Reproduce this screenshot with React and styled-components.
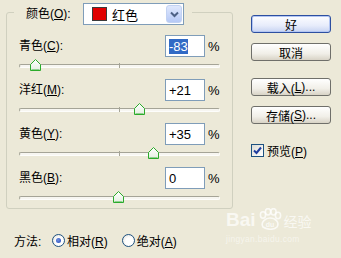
import React from 'react'
import styled, { createGlobalStyle } from 'styled-components'

const GlobalStyle = createGlobalStyle`
  html, body {
    margin: 0;
    padding: 0;
    background: #ece9d8;
  }
  body {
    font-family: 'Liberation Sans', 'Noto Sans CJK SC', sans-serif;
    font-size: 12px;
    color: #000;
  }
`

const channels = [
  { name: '青色', key: 'C', value: -83, text: '-83', selected: true },
  { name: '洋红', key: 'M', value: 21, text: '+21' },
  { name: '黄色', key: 'Y', value: 35, text: '+35' },
  { name: '黑色', key: 'B', value: 0, text: '0' },
]

const Page = styled.div`
  position: relative;
  width: 341px;
  height: 258px;
  box-sizing: border-box;
  padding-left: 6px;
  overflow: hidden;
`

const Main = styled.div`
  display: flex;
  align-items: flex-start;
`

const Group = styled.fieldset`
  box-sizing: border-box;
  width: 227px;
  height: 209px;
  margin: 0;
  padding: 10px 12px 0 12px;
  border: 1px solid #d0d0bf;
  border-radius: 3px;
  min-width: 0;
`

const Legend = styled.legend`
  display: flex;
  align-items: center;
  margin-left: -5px;
  padding: 3px 8px 0 12px;
`

const Label = styled.span`
  white-space: nowrap;
  line-height: 14px;
`

const ColorLabel = styled(Label)`
  width: 57px;
`

const Select = styled.div`
  box-sizing: border-box;
  width: 101px;
  height: 22px;
  display: flex;
  align-items: center;
  background: #fff;
  border: 1px solid #7f9db9;
  padding: 0 1px 0 8px;
`

const Swatch = styled.span`
  box-sizing: border-box;
  width: 15px;
  height: 14px;
  background: #e00000;
  border: 1px solid #3a3a3a;
  margin-right: 5px;
`

const SelectText = styled.span`
  flex: 1;
  font-size: 13px;
`

const ArrowButton = styled.span`
  box-sizing: border-box;
  width: 16px;
  height: 18px;
  display: flex;
  align-items: center;
  justify-content: center;
  border: 1px solid #c2d2f2;
  border-radius: 3px;
  background: linear-gradient(#dfe8fd, #b6c9f6);
`

const Row = styled.div`
  display: grid;
  grid-template-columns: 146px 40px 15px;
  align-items: center;
  height: 22px;
`

const ValueBox = styled.div`
  box-sizing: border-box;
  height: 22px;
  background: #fff;
  border: 1px solid #7f9db9;
  padding: 0 0 0 3px;
  display: flex;
  align-items: center;
  font-size: 13px;
`

const Selected = styled.span`
  background: #316ac5;
  color: #fff;
  line-height: 15px;
`

const Percent = styled.span`
  padding-left: 3px;
  font-size: 13px;
`

const SliderLine = styled.div`
  position: relative;
  height: 22px;
  padding-top: 7px;
  box-sizing: border-box;
`

const Track = styled.div`
  box-sizing: border-box;
  height: 4px;
  border: 1px solid;
  border-color: #a5a497 #fdfdfb #fdfdfb #a5a497;
  border-radius: 2px;
  background: #f7f6f1;
`

const Tick = styled.span`
  position: absolute;
  left: 100px;
  top: 6px;
  width: 1px;
  height: 5px;
  background: #a5a497;
`

const Thumb = styled.div`
  position: absolute;
  top: 2px;
  margin-left: -6px;
  line-height: 0;
`

const Side = styled.div`
  display: flex;
  flex-direction: column;
  margin-left: 18px;
  padding-top: 15px;
`

const Button = styled.div`
  box-sizing: border-box;
  width: 80px;
  height: 18px;
  margin-bottom: ${(p) => p.$gap}px;
  display: flex;
  align-items: center;
  justify-content: center;
  font-size: 12px;
  border: 1px solid ${(p) => (p.$primary ? '#2d4fa0' : '#6f6f6a')};
  border-radius: 3px;
  background: ${(p) =>
    p.$primary
      ? 'linear-gradient(#fdfdff, #e7ecfb 60%, #c7d3f2)'
      : 'linear-gradient(#ffffff, #f1efe8 60%, #d8d3c6)'};
  box-shadow: ${(p) => (p.$primary ? 'inset 0 0 0 1px #b3c6f3' : 'none')};
`

const Check = styled.label`
  display: flex;
  align-items: center;
  gap: 3px;
  margin-top: 1px;
`

const CheckBox = styled.span`
  box-sizing: border-box;
  width: 13px;
  height: 13px;
  border: 1px solid #1c5180;
  background: linear-gradient(135deg, #dcdcd5, #ffffff);
  display: flex;
  align-items: center;
  justify-content: center;
`

const MethodRow = styled.div`
  display: flex;
  align-items: center;
  height: 16px;
  margin-top: 23px;
  padding-left: 8px;
`

const MethodLabel = styled.span`
  width: 38px;
`

const Radio = styled.span`
  box-sizing: border-box;
  width: 13px;
  height: 13px;
  border-radius: 50%;
  border: 1px solid #1c5180;
  background: radial-gradient(circle at 60% 60%, #ffffff 40%, #dcdcd5);
  display: flex;
  align-items: center;
  justify-content: center;
  margin-right: 2px;

  &::after {
    content: '';
    width: 5px;
    height: 5px;
    border-radius: 50%;
    background: ${(p) => (p.$on ? 'radial-gradient(circle at 40% 40%, #6f8fe0, #2046b8)' : 'transparent')};
  }
`

const RadioText = styled.span`
  margin-right: ${(p) => p.$gap}px;
`

const Watermark = styled.div`
  position: absolute;
  left: 226px;
  top: 208px;
  display: flex;
  flex-direction: column;
  align-items: flex-start;
  color: rgba(255, 255, 255, 0.7);
  pointer-events: none;
`

const MarkTop = styled.div`
  display: flex;
  align-items: flex-end;
  gap: 1px;
`

const MarkBai = styled.span`
  font-family: 'Liberation Sans', sans-serif;
  font-weight: bold;
  font-size: 19px;
  line-height: 20px;
`

const MarkCn = styled.span`
  font-family: 'Noto Sans CJK SC', sans-serif;
  font-size: 14px;
  line-height: 18px;
`

const MarkUrl = styled.span`
  font-family: 'Liberation Sans', sans-serif;
  font-size: 8.5px;
  letter-spacing: 0.3px;
  margin-top: 4px;
  color: rgba(255, 255, 255, 0.55);
`

const SliderThumb = () => (
  <svg width="11" height="12" viewBox="0 0 11 12">
    <defs>
      <linearGradient id="th" x1="0" y1="0" x2="0" y2="1">
        <stop offset="0" stopColor="#ffffff" />
        <stop offset="1" stopColor="#e4eee0" />
      </linearGradient>
    </defs>
    <polygon points="0.5,5.5 5.5,0.5 10.5,5.5 10.5,11.5 0.5,11.5" fill="url(#th)" stroke="#2bab2b" />
    <line x1="1.5" y1="10.5" x2="9.5" y2="10.5" stroke="#8fd08f" />
  </svg>
)

const Paw = () => (
  <svg width="26" height="22" viewBox="0 0 26 22">
    <g fill="none" stroke="rgba(255,255,255,0.75)" strokeWidth="1.6">
      <ellipse cx="6" cy="7" rx="2.6" ry="3.2" />
      <ellipse cx="11" cy="3.8" rx="2.6" ry="3.2" />
      <ellipse cx="16.5" cy="3.8" rx="2.6" ry="3.2" />
      <ellipse cx="21" cy="7.5" rx="2.6" ry="3.2" />
      <path d="M6 19 C3 14 9 10 13 10 C18 10 23 14 20 19 C17 22 10 22 6 19 Z" />
    </g>
    <text x="13" y="19" textAnchor="middle" fontSize="7" fontWeight="bold" fill="rgba(255,255,255,0.75)" fontFamily="Liberation Sans">du</text>
  </svg>
)

const Mn = ({ k }) => (
  <>
    (<u>{k}</u>)
  </>
)

const App = () => {
  return (
    <>
      <GlobalStyle />
      <Page>
        <Main>
          <Group>
            <Legend>
              <ColorLabel>
                颜色<Mn k="O" />:
              </ColorLabel>
              <Select>
                <Swatch />
                <SelectText>红色</SelectText>
                <ArrowButton>
                  <svg width="9" height="7" viewBox="0 0 9 7">
                    <path d="M1 1.5 L4.5 5 L8 1.5" fill="none" stroke="#4d6185" strokeWidth="2" />
                  </svg>
                </ArrowButton>
              </Select>
            </Legend>
            {channels.map((c) => (
              <div key={c.key}>
                <Row>
                  <Label>
                    {c.name}
                    <Mn k={c.key} />:
                  </Label>
                  <ValueBox>
                    {c.selected ? <Selected>{c.text}</Selected> : c.text}
                  </ValueBox>
                  <Percent>%</Percent>
                </Row>
                <SliderLine>
                  <Track />
                  <Tick />
                  <Thumb style={{ left: 100 + c.value }}>
                    <SliderThumb />
                  </Thumb>
                </SliderLine>
              </div>
            ))}
          </Group>
          <Side>
            <Button $primary $gap={10}>好</Button>
            <Button $gap={17}>取消</Button>
            <Button $gap={10}>
              载入<Mn k="L" />...
            </Button>
            <Button $gap={17}>
              存储<Mn k="S" />...
            </Button>
            <Check>
              <CheckBox>
                <svg width="9" height="9" viewBox="0 0 9 9">
                  <path d="M1 4.5 L3.5 7 L8 1.5" fill="none" stroke="#1f3c9e" strokeWidth="2" />
                </svg>
              </CheckBox>
              <span>
                预览<Mn k="P" />
              </span>
            </Check>
          </Side>
        </Main>
        <MethodRow>
          <MethodLabel>方法:</MethodLabel>
          <Radio $on />
          <RadioText $gap={14}>
            相对<Mn k="R" />
          </RadioText>
          <Radio />
          <RadioText $gap={0}>
            绝对<Mn k="A" />
          </RadioText>
        </MethodRow>
        <Watermark>
          <MarkTop>
            <MarkBai>Bai</MarkBai>
            <Paw />
            <MarkCn>经验</MarkCn>
          </MarkTop>
          <MarkUrl>jingyan.baidu.com</MarkUrl>
        </Watermark>
      </Page>
    </>
  )
}

export default App
